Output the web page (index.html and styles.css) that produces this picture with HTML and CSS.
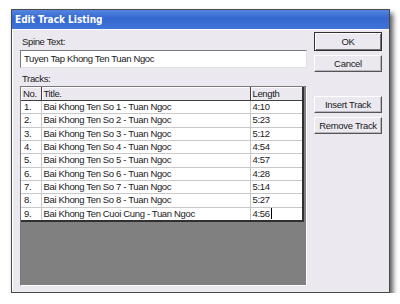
FILE: index.html
```
<!DOCTYPE html>
<html lang="en">
<head>
    <meta charset="UTF-8">
    <title>Edit Track Listing</title>
    <link rel="stylesheet" href="styles.css">
</head>
<body>
    <div class="dialog">
        <div class="title-bar">Edit Track Listing</div>
        <div class="dialog-body">
            <div class="main-col">
                <p class="label">Spine Text:</p>
                <div class="text-box">Tuyen Tap Khong Ten Tuan Ngoc</div>
                <p class="label tracks-label">Tracks:</p>
                <div class="list-box">
                    <table class="tracks">
                        <colgroup>
                            <col class="col-no">
                            <col class="col-title">
                            <col class="col-len">
                        </colgroup>
                        <thead>
                            <tr><th>No.</th><th>Title.</th><th>Length</th></tr>
                        </thead>
                        <tbody>
                            <tr><td>1.</td><td>Bai Khong Ten So 1 - Tuan Ngoc</td><td>4:10</td></tr>
                            <tr><td>2.</td><td>Bai Khong Ten So 2 - Tuan Ngoc</td><td>5:23</td></tr>
                            <tr><td>3.</td><td>Bai Khong Ten So 3 - Tuan Ngoc</td><td>5:12</td></tr>
                            <tr><td>4.</td><td>Bai Khong Ten So 4 - Tuan Ngoc</td><td>4:54</td></tr>
                            <tr><td>5.</td><td>Bai Khong Ten So 5 - Tuan Ngoc</td><td>4:57</td></tr>
                            <tr><td>6.</td><td>Bai Khong Ten So 6 - Tuan Ngoc</td><td>4:28</td></tr>
                            <tr><td>7.</td><td>Bai Khong Ten So 7 - Tuan Ngoc</td><td>5:14</td></tr>
                            <tr><td>8.</td><td>Bai Khong Ten So 8 - Tuan Ngoc</td><td>5:27</td></tr>
                            <tr><td>9.</td><td>Bai Khong Ten Cuoi Cung - Tuan Ngoc</td><td>4:56<span class="caret"></span></td></tr>
                        </tbody>
                    </table>
                </div>
            </div>
            <div class="button-col">
                <button class="btn btn-default">OK</button>
                <button class="btn">Cancel</button>
                <button class="btn btn-gap">Insert Track</button>
                <button class="btn">Remove Track</button>
            </div>
        </div>
    </div>
</body>
</html>
```

FILE: styles.css
```
body{
    margin: 0;
    background-color: #ffffff;
    font-family: "Liberation Sans", Arial, sans-serif;
    font-size: 9.5px;
    letter-spacing: -0.35px;
    color: #1a1a1a;
}
.dialog{
    margin: 9px 0 0 11px;
    width: 377px;
    height: 282px;
    border: 1px solid #4a4a4a;
    background-color: #ebe9ef;
    box-shadow: 3px 4px 5px rgba(0, 0, 0, 0.65);
    display: flex;
    flex-direction: column;
}
.title-bar{
    height: 19px;
    line-height: 19px;
    padding-left: 3px;
    color: #ffffff;
    font-family: "DejaVu Sans Condensed", "DejaVu Sans", sans-serif;
    font-weight: bold;
    font-size: 10px;
    letter-spacing: 0;
    background: linear-gradient(#5486e0, #3467cf 45%, #3f76da);
}
.dialog-body{
    flex: 1;
    display: flex;
    padding: 0 0 6px 7px;
    border-left: 1px solid #ffffff;
    border-top: 1px solid #ffffff;
}
.main-col{
    width: 287px;
    display: flex;
    flex-direction: column;
}
.label{
    margin: 5px 0 0 2px;
    height: 14px;
    line-height: 14px;
}
.tracks-label{
    margin-top: 4px;
}
.text-box{
    margin-top: 1px;
    height: 16px;
    line-height: 16px;
    padding-left: 3px;
    background-color: #ffffff;
    border-top: 1px solid #7a7a7a;
    border-left: 1px solid #7a7a7a;
    border-right: 1px solid #e0e0e0;
    border-bottom: 1px solid #e0e0e0;
}
.list-box{
    flex: 1;
    background-color: #808080;
    border-top: 1px solid #7a7a7a;
    border-left: 1px solid #7a7a7a;
    border-right: 1px solid #ffffff;
    border-bottom: 1px solid #ffffff;
}
.tracks{
    width: 283px;
    table-layout: fixed;
    border-collapse: collapse;
    background-color: #ffffff;
    border-right: 2px solid #303030;
    border-bottom: 2px solid #303030;
}
.col-no{
    width: 20px;
}
.col-len{
    width: 53px;
}
.tracks th{
    height: 13px;
    text-align: left;
    font-weight: normal;
    padding: 0 2px;
    background-color: #ebe9ef;
    border-right: 1px solid #404040;
    border-bottom: 1px solid #404040;
    box-shadow: inset 1px 1px 0 #ffffff;
}
.tracks td{
    height: 12.33px;
    line-height: 12px;
    padding: 0 2px;
    border-right: 1px solid #c8c8c8;
    border-bottom: 1px solid #c8c8c8;
    white-space: nowrap;
    overflow: hidden;
}
.tracks td:first-child{
    padding-left: 3px;
}
.caret{
    display: inline-block;
    width: 1px;
    height: 11px;
    margin-left: 1px;
    vertical-align: -2px;
    background-color: #000000;
}
.button-col{
    display: flex;
    flex-direction: column;
    padding: 2px 0 0 7px;
    gap: 4px;
}
.btn{
    width: 68px;
    height: 17px;
    padding: 0;
    font-family: "Liberation Sans", Arial, sans-serif;
    font-size: 9.5px;
    letter-spacing: -0.3px;
    color: #1a1a1a;
    background-color: #ebe9ef;
    border-top: 1px solid #ffffff;
    border-left: 1px solid #ffffff;
    border-right: 1px solid #555555;
    border-bottom: 1px solid #555555;
    box-shadow: inset -1px -1px 0 #b8b6bc;
}
.btn-default{
    height: 19px;
    border: 1px solid #303030;
    box-shadow: inset 1px 1px 0 #ffffff, inset -1px -1px 0 #707070;
}
.btn-gap{
    margin-top: 20px;
}
```
